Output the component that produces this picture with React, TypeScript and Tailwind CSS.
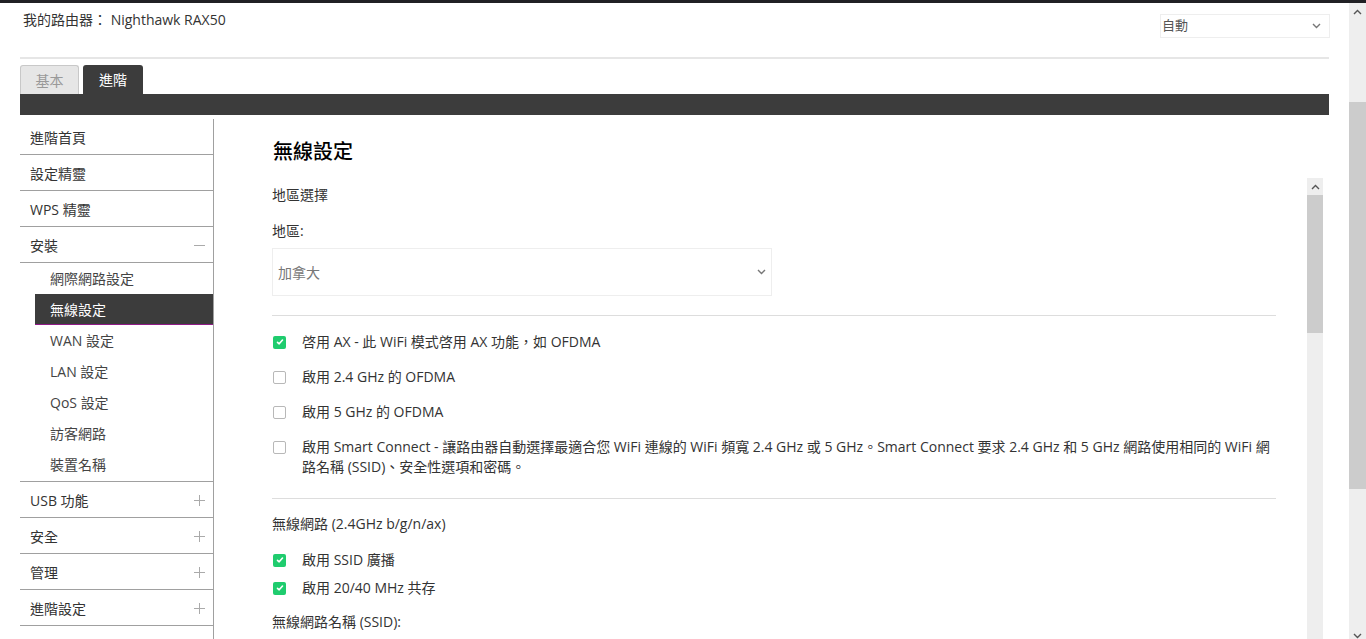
import React from "react";

const FONT = { fontFamily: '"Open Sans", "Noto Sans CJK TC", sans-serif' };

function Check({ on }: { on?: boolean }) {
  return on ? (
    <span className="flex h-[13px] w-[13px] shrink-0 items-center justify-center rounded-[2px] bg-[#1fcc6e]">
      <svg width="8" height="8" viewBox="0 0 8 8">
        <path d="M1.5 4.3 L3.2 5.8 L6.5 2" stroke="white" strokeWidth="1.6" fill="none" strokeLinecap="round" strokeLinejoin="round" />
      </svg>
    </span>
  ) : (
    <span className="h-[13px] w-[13px] shrink-0 rounded-[2px] border border-[#b8b8b8] bg-white" />
  );
}

function Chevron({ up, className }: { up?: boolean; className?: string }) {
  return (
    <svg width="9" height="6" viewBox="0 0 9 6" className={className}>
      <path d={up ? "M1 5 L4.5 1.5 L8 5" : "M1 1 L4.5 4.5 L8 1"} stroke="currentColor" strokeWidth="1.4" fill="none" />
    </svg>
  );
}

function SideTop({ label, sign }: { label: string; sign?: "-" | "+" }) {
  return (
    <div className="flex h-[36px] items-center justify-between border-b border-[#a0a0a0] pl-[10px] pr-[8px] pt-[2px] text-[14px] text-[#333]">
      <span>{label}</span>
      {sign === "-" && <span className="h-px w-[11px] bg-[#aaa]" />}
      {sign === "+" && (
        <svg width="11" height="11" viewBox="0 0 11 11">
          <path d="M5.5 0 V11 M0 5.5 H11" stroke="#aaa" strokeWidth="1" />
        </svg>
      )}
    </div>
  );
}

function SideSub({ label, active }: { label: string; active?: boolean }) {
  return active ? (
    <div className="ml-[15px] flex h-[31px] items-center border-b border-[#8e1b86] bg-[#3c3c3c] pl-[15px] text-[14px] text-white">
      {label}
    </div>
  ) : (
    <div className="flex h-[31px] items-center pl-[30px] text-[14px] text-[#444]">{label}</div>
  );
}

function Row({ on, children }: { on?: boolean; children: React.ReactNode }) {
  return (
    <div className="flex items-start">
      <div className="flex h-[20px] w-[30px] shrink-0 items-center pl-px">
        <Check on={on} />
      </div>
      <div className="text-[14px] leading-[20px] text-[#333]">{children}</div>
    </div>
  );
}

export default function App() {
  return (
    <div className="flex h-[639px] w-[1366px] flex-col overflow-hidden bg-white" style={FONT}>
      <div className="h-[3px] shrink-0 bg-[#202024]" />
      <div className="flex min-h-0 flex-1">
        <div className="min-w-0 flex-1 px-[20px]">
          {/* header */}
          <div className="flex h-[54px] items-start justify-between">
            <div className="pl-[3px] pt-[6px] text-[14px] text-[#333]">我的路由器： Nighthawk RAX50</div>
            <div className="mr-[-1px] mt-[11px] flex h-[24px] w-[170px] items-center justify-between border border-[#eee] pl-[1px] pr-[8px] text-[13px] text-[#555]">
              <span>自動</span>
              <Chevron className="text-[#777]" />
            </div>
          </div>
          <div className="h-[2px] bg-[#e6e6e6]" />
          {/* tabs */}
          <div className="mt-[6px] flex items-end gap-[4px]">
            <div className="flex h-[29px] w-[59px] items-center justify-center rounded-t-[3px] border border-b-0 border-[#c8c8c8] bg-[#e6e6e6] text-[14px] text-[#999]">基本</div>
            <div className="flex h-[29px] w-[60px] items-center justify-center rounded-t-[3px] bg-[#3c3c3c] text-[14px] text-white">進階</div>
          </div>
          <div className="h-[21px] bg-[#3c3c3c]" />
          {/* body */}
          <div className="mt-[4px] flex">
            <div className="w-[194px] shrink-0 border-r border-[#a0a0a0] pb-[40px]">
              <SideTop label="進階首頁" />
              <SideTop label="設定精靈" />
              <SideTop label="WPS 精靈" />
              <SideTop label="安裝" sign="-" />
              <div className="border-b border-[#a0a0a0] pb-px">
                <SideSub label="網際網路設定" />
                <SideSub label="無線設定" active />
                <SideSub label="WAN 設定" />
                <SideSub label="LAN 設定" />
                <SideSub label="QoS 設定" />
                <SideSub label="訪客網路" />
                <SideSub label="裝置名稱" />
              </div>
              <SideTop label="USB 功能" sign="+" />
              <SideTop label="安全" sign="+" />
              <SideTop label="管理" sign="+" />
              <SideTop label="進階設定" sign="+" />
            </div>
            <div className="min-w-0 flex-1">
              <div className="pl-[59px] pt-[18px] text-[20px] font-medium leading-[28px] text-black" style={{ fontFamily: '"Noto Sans CJK TC", sans-serif' }}>
                無線設定
              </div>
              <div className="mt-[13px] flex pr-[6px]">
                <div className="min-w-0 flex-1 pl-[58px] pr-[31px]">
                  <div className="pt-[8px] text-[14px] leading-[18px] text-[#333]">地區選擇</div>
                  <div className="mt-[18px] text-[14px] leading-[18px] text-[#333]">地區:</div>
                  <div className="mt-[8px] flex h-[48px] w-[500px] items-center justify-between border border-[#eee] pl-[5px] pr-[5px] text-[14px] text-[#777]">
                    <span>加拿大</span>
                    <Chevron className="text-[#777]" />
                  </div>
                  <div className="mt-[19px] h-px bg-[#ddd]" />
                  <div className="mt-[16px] flex flex-col gap-[15px]">
                    <Row on>啓用 AX - 此 WiFi 模式啓用 AX 功能，如 OFDMA</Row>
                    <Row>啟用 2.4 GHz 的 OFDMA</Row>
                    <Row>啟用 5 GHz 的 OFDMA</Row>
                    <Row>
                      啟用 Smart Connect - 讓路由器自動選擇最適合您 WiFi 連線的 WiFi 頻寬 2.4 GHz 或 5 GHz。Smart Connect 要求 2.4 GHz 和 5 GHz 網路使用相同的 WiFi 網路名稱 (SSID)、安全性選項和密碼。
                    </Row>
                  </div>
                  <div className="mt-[21px] h-px bg-[#ddd]" />
                  <div className="mt-[16px] text-[14px] leading-[18px] text-[#333]">無線網路 (2.4GHz b/g/n/ax)</div>
                  <div className="mt-[17px] flex flex-col gap-[8px]">
                    <Row on>啟用 SSID 廣播</Row>
                    <Row on>啟用 20/40 MHz 共存</Row>
                  </div>
                  <div className="mt-[15px] text-[14px] leading-[18px] text-[#333]">無線網路名稱 (SSID):</div>
                </div>
                {/* inner scrollbar */}
                <div className="flex h-[480px] w-[16px] shrink-0 flex-col bg-[#eee]">
                  <div className="flex h-[17px] items-center justify-center text-[#555]">
                    <Chevron up />
                  </div>
                  <div className="h-[138px] bg-[#ccc]" />
                </div>
              </div>
            </div>
          </div>
        </div>
        {/* page scrollbar */}
        <div className="flex w-[17px] shrink-0 flex-col bg-[#eee]">
          <div className="flex h-[17px] items-center justify-center text-[#555]">
            <Chevron up />
          </div>
          <div className="mt-[82px] h-[387px] bg-[#ccc]" />
          <div className="flex-1" />
          <div className="flex h-[10px] items-end justify-center text-[#555]">
            <Chevron />
          </div>
        </div>
      </div>
    </div>
  );
}
